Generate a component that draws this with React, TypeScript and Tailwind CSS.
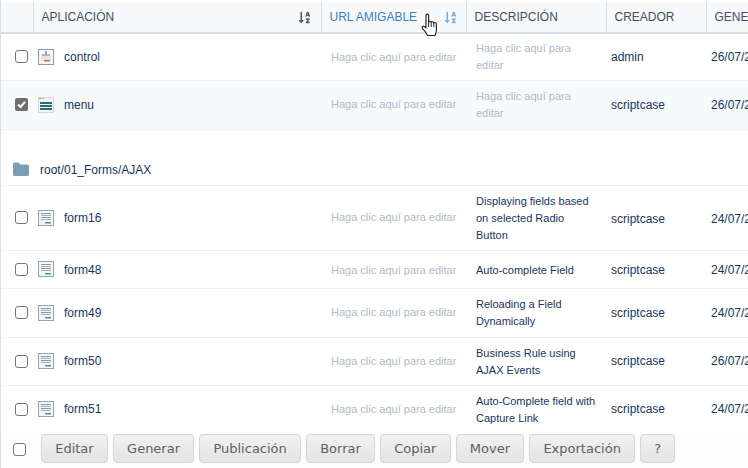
import { FaSortAlphaDown } from 'react-icons/fa';

type Row = {
    name: string;
    icon: 'control' | 'menu' | 'form';
    desc?: string;
    creator: string;
    date: string;
    h: string;
    checked?: boolean;
    // 1px text nudges, the reference rounds these rows differently
    nameCls?: string;
    descCls?: string;
    infoCls?: string;
};

const groupOne: Row[] = [
    { name: 'control', icon: 'control', creator: 'admin', date: '26/07/2024', h: 'h-[47px]' },
    { name: 'menu', icon: 'menu', creator: 'scriptcase', date: '26/07/2024', h: 'h-[49px]', checked: true },
];

const groupTwo: Row[] = [
    { name: 'form16', icon: 'form', desc: 'Displaying fields based on selected Radio Button', creator: 'scriptcase', date: '24/07/2024', h: 'h-[65px]', descCls: 'pt-[2px]', infoCls: 'pt-[2px]' },
    { name: 'form48', icon: 'form', desc: 'Auto-complete Field', creator: 'scriptcase', date: '24/07/2024', h: 'h-[38px]', nameCls: 'pt-[2px]', descCls: 'pt-[2px]', infoCls: 'pt-[2px]' },
    { name: 'form49', icon: 'form', desc: 'Reloading a Field Dynamically', creator: 'scriptcase', date: '24/07/2024', h: 'h-[49px]' },
    { name: 'form50', icon: 'form', desc: 'Business Rule using AJAX Events', creator: 'scriptcase', date: '26/07/2024', h: 'h-[48px]', descCls: 'pt-[2px]' },
    { name: 'form51', icon: 'form', desc: 'Auto-Complete field with Capture Link', creator: 'scriptcase', date: '24/07/2024', h: 'h-[48px]', descCls: 'pt-[2px]' },
];

const buttons = ['Editar', 'Generar', 'Publicación', 'Borrar', 'Copiar', 'Mover', 'Exportación', '?'];

function AppIcon({ type }: { type: Row['icon'] }) {
    if (type === 'control') {
        return (
            <svg width="16" height="16" viewBox="0 0 16 16">
                <rect x="0.5" y="0.5" width="15" height="15" fill="#f7f8f9" stroke="#8c9aa8" />
                <rect x="7" y="2" width="2" height="4" fill="#8ea3ae" />
                <rect x="4" y="5" width="8" height="2" fill="#a9b8c0" />
                <rect x="3" y="7" width="10" height="5" fill="#eee0dc" />
                <rect x="6" y="11" width="6" height="1.5" fill="#bf6a60" />
            </svg>
        );
    }
    if (type === 'menu') {
        return (
            <svg width="16" height="16" viewBox="0 0 16 16">
                <rect x="0.5" y="0.5" width="15" height="15" fill="#f3f5f5" stroke="#d3dadc" />
                <rect x="1" y="1" width="2" height="1" fill="#d9736a" />
                <rect x="4" y="1" width="2" height="1" fill="#9cbf7d" />
                <rect x="2" y="5" width="12" height="2" fill="#2d6a78" />
                <rect x="2" y="8" width="12" height="2" fill="#2d6a78" />
                <rect x="2" y="11" width="12" height="2" fill="#2d6a78" />
            </svg>
        );
    }
    return (
        <svg width="16" height="16" viewBox="0 0 16 16">
            <rect x="0.5" y="0.5" width="15" height="15" fill="#f5f6f7" stroke="#98a5b1" />
            <rect x="3" y="3" width="10" height="1" fill="#8b98a3" />
            <rect x="3" y="5" width="10" height="1" fill="#a5b0b9" />
            <rect x="3" y="7" width="10" height="1" fill="#8b98a3" />
            <rect x="3" y="9" width="10" height="1" fill="#a5b0b9" />
            <rect x="7" y="12" width="6" height="1.5" fill="#3f9ab0" />
        </svg>
    );
}

function Check({ checked }: { checked?: boolean }) {
    if (checked) {
        return (
            <span className="flex h-[13px] w-[13px] items-center justify-center rounded-[2px] bg-[#6f6f6f]">
                <svg width="11" height="11" viewBox="0 0 11 11">
                    <path d="M2 5.5 L4.5 8 L9 2.8" fill="none" stroke="#ffffff" strokeWidth="2" />
                </svg>
            </span>
        );
    }
    return <span className="block h-[13px] w-[13px] rounded-[3px] border border-[#767676] bg-white" />;
}

function Hint() {
    return <span className="text-[#aebbc9]">Haga clic aquí para editar</span>;
}

function AppRow({ row }: { row: Row }) {
    return (
        <tr className={`${row.h} border-b border-[#edf1f5] ${row.checked ? 'bg-[#f7f9fb]' : 'bg-white'}`}>
            <td className="pl-[14px]">
                <Check checked={row.checked} />
            </td>
            <td className="pl-[5px]">
                <div className="flex items-center gap-[10px] text-[12px] text-[#17365d]">
                    <AppIcon type={row.icon} />
                    <span className={row.nameCls}>{row.name}</span>
                </div>
            </td>
            <td className={`pl-[10px] text-[11px] ${row.nameCls ?? ''}`}>
                <Hint />
            </td>
            <td className={`pl-[10px] pr-[8px] text-[11px] leading-[17px] ${row.descCls ?? ''}`}>
                {row.desc ? <span className="text-[#17365d]">{row.desc}</span> : <Hint />}
            </td>
            <td className={`pl-[5px] text-[12px] text-[#17365d] ${row.infoCls ?? ''}`}>{row.creator}</td>
            <td className={`pl-[5px] text-[12px] whitespace-nowrap text-[#17365d] ${row.infoCls ?? ''}`}>{row.date}</td>
        </tr>
    );
}

function HandCursor() {
    return (
        <svg className="absolute left-[420px] top-[13px]" width="20" height="26" viewBox="0 0 20 26">
            <path
                d="M5 2.2 C5 0.8 7.6 0.8 7.6 2.2 L7.6 9 C8 8 10 8 10.2 9.4 C10.6 8.4 12.6 8.6 12.8 10 C13.4 9.2 15.4 9.6 15.4 11.2 L15.4 16.5 C15.4 19 14.4 20.5 14 22.5 L6.5 22.5 C5.5 20 3.5 18 1.6 15.6 C0.4 14 2.2 12.4 3.6 13.6 L5 15 Z"
                fill="#ffffff"
                stroke="#2b2b2b"
                strokeWidth="1.2"
                strokeLinejoin="round"
            />
            <path d="M7.6 9 L7.6 14 M10.2 9.4 L10.2 14 M12.8 10 L12.8 14" stroke="#2b2b2b" strokeWidth="1" fill="none" />
        </svg>
    );
}

export default function App() {
    return (
        <div className="relative flex h-[468px] w-[748px] flex-col overflow-hidden border-l border-[#d5e0e8] bg-white pt-[2px] font-['Liberation_Sans',Arial,sans-serif]">
            <div className="flex-1 overflow-hidden">
                <table className="w-[820px] table-fixed border-collapse">
                    <colgroup>
                        <col className="w-[32px]" />
                        <col className="w-[288px]" />
                        <col className="w-[145px]" />
                        <col className="w-[140px]" />
                        <col className="w-[100px]" />
                        <col className="w-[115px]" />
                    </colgroup>
                    <thead>
                        <tr className="h-[31px] border-b-2 border-[#d5dee6] bg-[#f7f9fb] text-left text-[12px] font-normal text-[#3f4f63]">
                            <th className="font-normal" />
                            <th className="border-l border-[#d5dee6] pl-[8px] font-normal">
                                <div className="flex items-center justify-between pr-[10px]">
                                    <span>APLICACIÓN</span>
                                    <FaSortAlphaDown className="text-[13px] text-[#55606e]" />
                                </div>
                            </th>
                            <th className="border-l border-[#d5dee6] pl-[8px] font-normal text-[#3b7fc4]">
                                <div className="flex items-center justify-between pr-[9px]">
                                    <span>URL AMIGABLE</span>
                                    <FaSortAlphaDown className="text-[13px] text-[#82aede]" />
                                </div>
                            </th>
                            <th className="border-l border-[#d5dee6] pl-[8px] font-normal">DESCRIPCIÓN</th>
                            <th className="border-l border-[#d5dee6] pl-[8px] font-normal">CREADOR</th>
                            <th className="border-l border-[#d5dee6] pl-[8px] font-normal">GENERADO</th>
                        </tr>
                    </thead>
                    <tbody>
                        {groupOne.map(row => (
                            <AppRow key={row.name} row={row} />
                        ))}
                        <tr className="h-[56px] border-b border-[#edf1f5]">
                            <td colSpan={6} className="pl-[12px] align-bottom pb-[6px]">
                                <div className="flex items-center gap-[11px] text-[12px] text-[#17365d]">
                                    <svg width="16" height="14" viewBox="0 0 16 14">
                                        <path d="M0 2 Q0 0.5 1.5 0.5 L5.5 0.5 L7.5 2.5 L14.5 2.5 Q16 2.5 16 4 L16 12.5 Q16 14 14.5 14 L1.5 14 Q0 14 0 12.5 Z" fill="#7c9db3" />
                                    </svg>
                                    <span className="pt-[2px]">root/01_Forms/AJAX</span>
                                </div>
                            </td>
                        </tr>
                        {groupTwo.map(row => (
                            <AppRow key={row.name} row={row} />
                        ))}
                    </tbody>
                </table>
            </div>
            <div className="flex h-[35px] shrink-0 items-start gap-[5px] bg-[#fdfdfd] pl-[12px] pt-[1px]">
                <span className="mt-[9px] mr-[10px]">
                    <Check />
                </span>
                {buttons.map(label => (
                    <button
                        key={label}
                        className="h-[29px] rounded-[4px] border border-[#d5d5d5] bg-gradient-to-b from-[#f1f1f1] to-[#e4e4e4] px-[13.2px] font-['DejaVu_Sans',sans-serif] text-[13px] text-[#5f5f5f]"
                    >
                        {label}
                    </button>
                ))}
            </div>
            <HandCursor />
        </div>
    );
}
